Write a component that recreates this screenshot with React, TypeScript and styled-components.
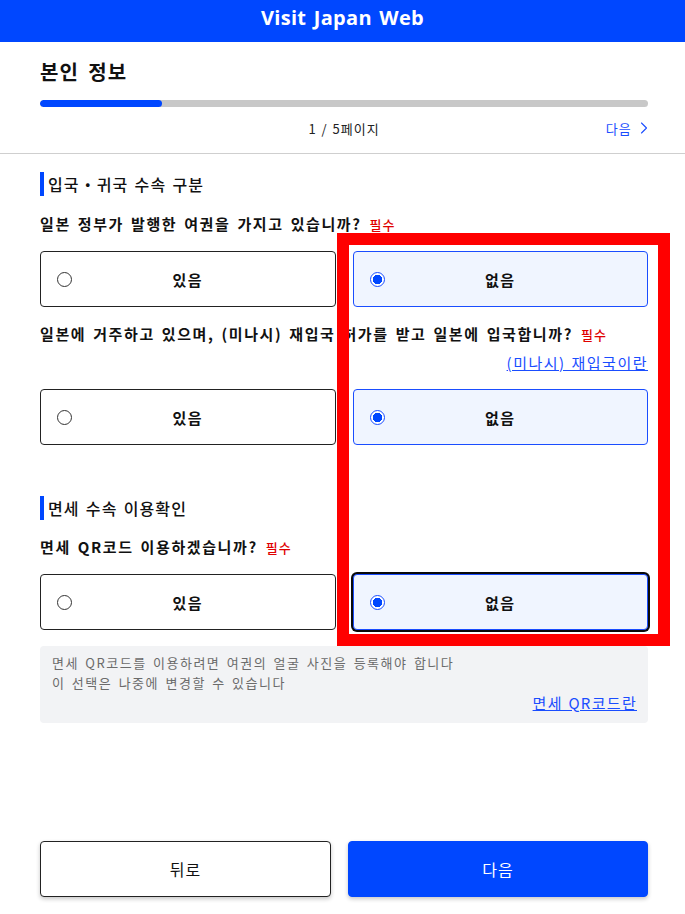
import styled, { createGlobalStyle } from "styled-components";
import { ChevronRight } from "lucide-react";

const GlobalStyle = createGlobalStyle`
  body {
    margin: 0;
    background: #ffffff;
    font-family: "Noto Sans", "Noto Sans CJK KR", sans-serif;
    color: #111111;
  }
  * {
    box-sizing: border-box;
  }
`;

const Page = styled.div`
  position: relative;
  width: 685px;
  min-height: 914px;
  background: #ffffff;
`;

const Header = styled.header`
  height: 42px;
  background: #0047ff;
  color: #ffffff;
  display: flex;
  align-items: center;
  justify-content: center;
  padding-bottom: 7px;
  font-family: "Open Sans", "Noto Sans", sans-serif;
  font-size: 20px;
  font-weight: 700;
  letter-spacing: 0.3px;
  word-spacing: 2px;
`;

const TopArea = styled.div`
  padding: 16px 37px 0 40px;
`;

const PageTitle = styled.h1`
  margin: 0;
  font-size: 20px;
  line-height: 28px;
  font-weight: 700;
  letter-spacing: 1px;
  word-spacing: 4px;
  font-family: "Noto Sans CJK KR", sans-serif;
`;

const ProgressTrack = styled.div`
  margin-top: 14px;
  height: 7px;
  border-radius: 4px;
  background: #c8c8c8;
  overflow: hidden;
`;

const ProgressFill = styled.div`
  height: 100%;
  border-radius: 4px;
  background: #0047ff;
`;

const PagerRow = styled.div`
  margin-top: 11px;
  display: grid;
  grid-template-columns: 1fr auto 1fr;
  align-items: center;
  height: 20px;
  font-size: 13px;
  font-family: "Noto Sans CJK KR", sans-serif;
`;

const PageCount = styled.span`
  grid-column: 2;
  color: #222222;
  letter-spacing: 1px;
  word-spacing: 1px;
`;

const NextLink = styled.a`
  grid-column: 3;
  justify-self: end;
  display: flex;
  align-items: center;
  gap: 2px;
  margin-right: -6px;
  color: #1a4dff;
  letter-spacing: 1.2px;
  text-decoration: none;
`;

const Divider = styled.hr`
  margin: 15px 0 0;
  border: none;
  border-top: 1px solid #cfcfcf;
`;

const Content = styled.main`
  padding: 0 37px 0 40px;
  font-family: "Noto Sans CJK KR", sans-serif;
`;

const SectionTitle = styled.h2<{ $top: number }>`
  margin: ${(p) => p.$top}px 0 0;
  height: 24px;
  display: flex;
  align-items: center;
  padding-left: 4px;
  border-left: 4px solid #0047ff;
  font-size: 16px;
  font-weight: 500;
  letter-spacing: 1.1px;
  word-spacing: 1.5px;
`;

const Question = styled.p<{ $top: number }>`
  margin: ${(p) => p.$top}px 0 0;
  font-size: 15px;
  line-height: 22px;
  font-weight: 700;
  letter-spacing: 1.6px;
  word-spacing: 2px;
`;

const Required = styled.span`
  margin-left: 1px;
  color: #e00000;
  font-size: 13px;
  font-weight: 500;
  letter-spacing: 1px;
`;

const HelpLink = styled.a`
  display: block;
  margin-top: 7px;
  text-align: right;
  font-size: 15px;
  line-height: 20px;
  color: #1a4dff;
  letter-spacing: 1.5px;
  word-spacing: 1px;
  text-decoration: underline;
`;

const OptionRow = styled.div<{ $top: number }>`
  margin-top: ${(p) => p.$top}px;
  display: grid;
  grid-template-columns: 1fr 1fr;
  gap: 17px;
`;

const Option = styled.label<{ $checked?: boolean; $focused?: boolean }>`
  height: 56px;
  display: grid;
  grid-template-columns: 46px 1fr 46px;
  align-items: center;
  border: 1px solid ${(p) => (p.$checked ? "#1a4dff" : "#222222")};
  border-radius: 4px;
  background: ${(p) => (p.$checked ? "#f0f5ff" : "#ffffff")};
  box-shadow: ${(p) => (p.$focused ? "0 0 0 2px #0a0a0a" : "none")};
  cursor: pointer;
`;

const Radio = styled.span<{ $checked?: boolean }>`
  justify-self: start;
  margin-left: 16px;
  width: 15px;
  height: 15px;
  border-radius: 50%;
  border: ${(p) => (p.$checked ? "1.5px solid #1a4dff" : "1px solid #333333")};
  background: ${(p) =>
    p.$checked ? "radial-gradient(circle, #0047ff 0 4.5px, #ffffff 5px)" : "#ffffff"};
`;

const OptionLabel = styled.span`
  text-align: center;
  font-size: 15px;
  font-weight: 700;
  letter-spacing: 1.5px;
`;

const InfoBox = styled.div`
  margin-top: 16px;
  padding: 7px 11px 10px 12px;
  background: #f2f3f5;
  border-radius: 4px;
  color: #6b6b6b;
  font-size: 13px;
  line-height: 20px;
  letter-spacing: 1.5px;
  word-spacing: 2px;
`;

const InfoLink = styled.a`
  display: block;
  text-align: right;
  color: #1a4dff;
  font-size: 15px;
  letter-spacing: 1.3px;
  word-spacing: 1px;
  text-decoration: underline;
`;

const Footer = styled.footer`
  margin-top: 118px;
  padding: 0 37px 0 40px;
  display: grid;
  grid-template-columns: 291px 1fr;
  gap: 17px;
`;

const FooterButton = styled.button<{ $primary?: boolean }>`
  height: 56px;
  border-radius: 4px;
  border: 1px solid ${(p) => (p.$primary ? "#0047ff" : "#222222")};
  background: ${(p) => (p.$primary ? "#0047ff" : "#ffffff")};
  color: ${(p) => (p.$primary ? "#ffffff" : "#111111")};
  box-shadow: 0 2px 4px rgba(0, 0, 0, 0.22);
  font-family: "Noto Sans CJK KR", sans-serif;
  font-size: 16px;
  letter-spacing: 1px;
  cursor: pointer;
`;

const Annotation = styled.div`
  position: absolute;
  left: 337px;
  top: 233px;
  width: 333px;
  height: 413px;
  border: 12px solid #ff0000;
  pointer-events: none;
`;

interface ChoiceProps {
  selected: "yes" | "no";
  focused?: boolean;
  top: number;
}

const Choice = ({ selected, focused, top }: ChoiceProps) => (
  <OptionRow $top={top}>
    <Option $checked={selected === "yes"}>
      <Radio $checked={selected === "yes"} />
      <OptionLabel>있음</OptionLabel>
    </Option>
    <Option $checked={selected === "no"} $focused={focused}>
      <Radio $checked={selected === "no"} />
      <OptionLabel>없음</OptionLabel>
    </Option>
  </OptionRow>
);

const App = () => {
  const step = 1;
  const total = 5;

  return (
    <Page>
      <GlobalStyle />
      <Header>Visit Japan Web</Header>
      <TopArea>
        <PageTitle>본인 정보</PageTitle>
        <ProgressTrack>
          <ProgressFill style={{ width: `${(step / total) * 100}%` }} />
        </ProgressTrack>
        <PagerRow>
          <PageCount>
            {step} / {total}페이지
          </PageCount>
          <NextLink>
            다음
            <ChevronRight size={20} strokeWidth={1.3} />
          </NextLink>
        </PagerRow>
      </TopArea>
      <Divider />
      <Content>
        <SectionTitle $top={18}>입국・귀국 수속 구분</SectionTitle>
        <Question $top={17}>
          일본 정부가 발행한 여권을 가지고 있습니까? <Required>필수</Required>
        </Question>
        <Choice selected="no" top={15} />

        <Question $top={16}>
          일본에 거주하고 있으며, (미나시) 재입국 허가를 받고 일본에 입국합니까?{" "}
          <Required>필수</Required>
        </Question>
        <HelpLink>(미나시) 재입국이란</HelpLink>
        <Choice selected="no" top={16} />

        <SectionTitle $top={51}>면세 수속 이용확인</SectionTitle>
        <Question $top={16}>
          면세 QR코드 이용하겠습니까? <Required>필수</Required>
        </Question>
        <Choice selected="no" focused top={15} />

        <InfoBox>
          면세 QR코드를 이용하려면 여권의 얼굴 사진을 등록해야 합니다
          <br />이 선택은 나중에 변경할 수 있습니다
          <InfoLink>면세 QR코드란</InfoLink>
        </InfoBox>
      </Content>
      <Footer>
        <FooterButton>뒤로</FooterButton>
        <FooterButton $primary>다음</FooterButton>
      </Footer>
      <Annotation />
    </Page>
  );
};

export default App;
